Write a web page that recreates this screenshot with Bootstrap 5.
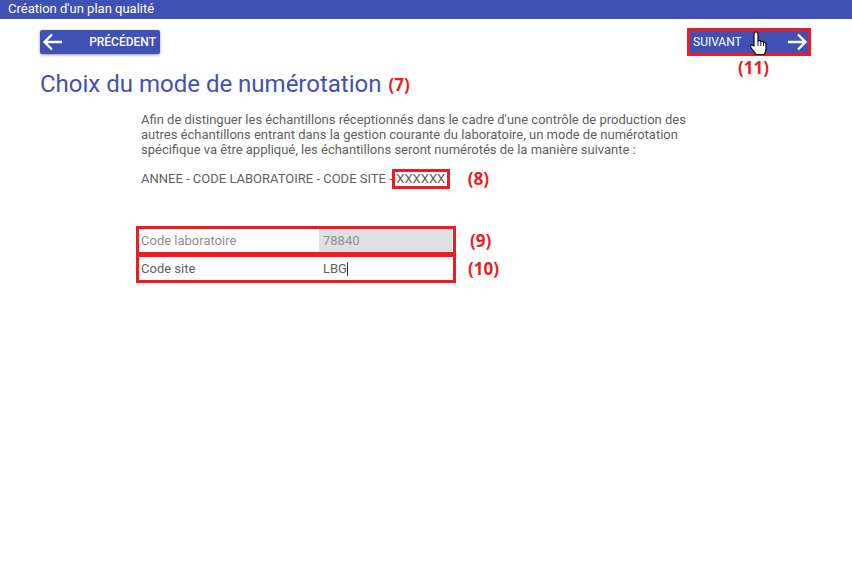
<!DOCTYPE html>
<html lang="fr">
<head>
    <meta charset="UTF-8" />
    <title>Création d'un plan qualité</title>
    <link href="https://cdn.jsdelivr.net/npm/bootstrap@5.3.2/dist/css/bootstrap.min.css" rel="stylesheet" />
    <style>
        body { font-family: Roboto, "Liberation Sans", sans-serif; font-size: 13px; color: #616161; background: #fff; }
        .top-bar { height: 19px; line-height: 18px; padding-left: 8px; background: #3f51b5; color: #fff; font-size: 13px; font-weight: 400; }
        .page-body { padding: 11px 41px 0 40px; }
        .nav-btn { display: flex; align-items: center; justify-content: space-between; height: 24px; background: #3f51b5; color: #fff; border: 0; border-radius: 2px; font-size: 12px; font-weight: 500; padding: 0 4px 0 2px; }
        .nav-btn svg { display: block; }
        .btn-prev { width: 120px; box-shadow: 0 1px 3px rgba(0,0,0,.4); }
        .next-wrap { position: relative; margin-top: -2px; }
        .btn-next { width: 124px; height: 28px; border: 3px solid #ed1c24; border-radius: 0; padding: 0 0 0 3px; font-weight: 400; }
        .hand { position: absolute; left: 62px; top: 3px; }
        .mark-num { color: #ed1c24; font-family: "Open Sans", sans-serif; font-weight: 700; font-size: 17px; line-height: 20px; }
        .next-num { position: absolute; left: 51px; top: 30px; }
        .page-title { color: #3f51b5; font-size: 24px; font-weight: 400; line-height: 28px; margin: 14px 0 0; }
        .page-title .mark-num { vertical-align: 1px; margin-left: 1px; }
        .intro-block { margin: 14px 0 0 101px; width: 550px; }
        .intro-text { line-height: 15px; margin: 0; }
        .code-line { display: flex; align-items: center; margin-top: 12px; line-height: 16px; white-space: nowrap; }
        .code-box { border: 3px solid #ed1c24; padding: 0 1.5px; margin-left: -1px; line-height: 14px; }
        .code-line .mark-num { margin-left: 18px; }
        .form-area { margin: 37px 0 0 96px; display: flex; flex-direction: column; }
        .form-line { display: flex; align-items: center; }
        .form-box { width: 320px; height: 29px; border: 3px solid #ed1c24; display: flex; align-items: stretch; padding: 0 1px 0 2px; }
        .form-line + .form-line { margin-top: -1px; }
        .form-label-txt { width: 178px; line-height: 23px; }
        .form-value { width: 133px; padding-left: 4px; line-height: 23px; }
        .is-off .form-label-txt, .is-off .form-value { color: #8e8e8e; }
        .is-off .form-value { background: #e0e0e0; }
        .caret-bar { display: inline-block; width: 1px; height: 14px; background: #333; vertical-align: -3px; }
        .form-line .mark-num { margin-left: 14px; }
        .form-line.second .mark-num { margin-left: 12px; }
    </style>
</head>
<body>
<div class="top-bar">Création d'un plan qualité</div>
<div class="page-body">
    <div class="d-flex justify-content-between align-items-start">
        <button type="button" class="nav-btn btn-prev">
            <svg width="20" height="18" viewBox="0 0 20 18" fill="none" stroke="#fff" stroke-width="2.4"><path d="M20 9H2.500M10 1.500 2.500 9l7.500 7.500"/></svg>
            <span>PRÉCÉDENT</span>
        </button>
        <div class="next-wrap">
            <button type="button" class="nav-btn btn-next">
                <span>SUIVANT</span>
                <svg width="20" height="18" viewBox="0 0 20 18" fill="none" stroke="#fff" stroke-width="2.400"><path d="M0 9h17.500M10 1.500 17.500 9 10 16.500"/></svg>
            </button>
            <svg class="hand" width="19" height="25" viewBox="0 0 19 25">
                <path d="M5 3c0-2.600 4-2.600 4 0v7c1.200-.8 2.500-.4 2.800.6 1.200-.7 2.500-.2 2.700.8 1.200-.4 2.500.4 2.500 1.600v5c0 2-1 3-1.500 5.500H7c-.8-2-3-3.500-5-7C1 14.500 2.500 12.800 5 15z" fill="#fff" stroke="#000" stroke-width="1.100" stroke-linejoin="round"/>
                <path d="M9 10v5M11.800 11v4M14.500 12v3" fill="none" stroke="#000" stroke-width=".9"/>
            </svg>
            <span class="mark-num next-num">(11)</span>
        </div>
    </div>
    <h1 class="page-title">Choix du mode de numérotation <span class="mark-num">(7)</span></h1>
    <div class="intro-block">
        <p class="intro-text">Afin de distinguer les échantillons réceptionnés dans le cadre d'une contrôle de production des autres échantillons entrant dans la gestion courante du laboratoire, un mode de numérotation spécifique va être appliqué, les échantillons seront numérotés de la manière suivante :</p>
        <div class="code-line">
            <span>ANNEE - CODE LABORATOIRE - CODE SITE -</span>
            <span class="code-box">XXXXXX</span>
            <span class="mark-num">(8)</span>
        </div>
    </div>
    <div class="form-area">
        <div class="form-line">
            <div class="form-box is-off">
                <span class="form-label-txt">Code laboratoire</span>
                <span class="form-value">78840</span>
            </div>
            <span class="mark-num">(9)</span>
        </div>
        <div class="form-line second">
            <div class="form-box">
                <span class="form-label-txt">Code site</span>
                <span class="form-value">LBG<span class="caret-bar"></span></span>
            </div>
            <span class="mark-num">(10)</span>
        </div>
    </div>
</div>
<script src="https://cdn.jsdelivr.net/npm/bootstrap@5.3.2/dist/js/bootstrap.bundle.min.js"></script>
</body>
</html>
